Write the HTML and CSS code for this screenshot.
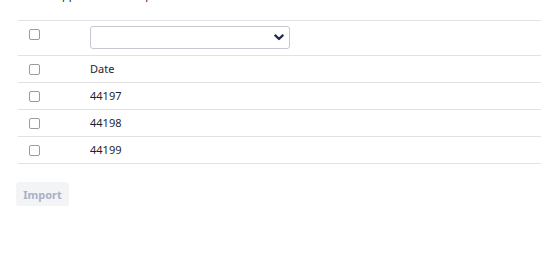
FILE: index.html
```html
<!DOCTYPE html>
<html lang="en">
<head>
<meta charset="utf-8">
<title>Import</title>
<link rel="stylesheet" href="styles.css">
</head>
<body>
<div class="page">
  <p class="intro">Some supported values: pick a column.</p>
  <table class="grid">
    <tbody>
      <tr class="head-row">
        <td class="cb-cell"><input type="checkbox" class="cb"></td>
        <td class="val-cell">
          <div class="select-wrap">
            <select class="select"><option></option></select>
            <svg class="chev" width="10" height="7" viewBox="0 0 10 7" aria-hidden="true"><path d="M1.3 1.4 L5 5 L8.7 1.4" fill="none" stroke="#1f2a4a" stroke-width="2.2" stroke-linecap="round" stroke-linejoin="round"/></svg>
          </div>
        </td>
      </tr>
      <tr>
        <td class="cb-cell"><input type="checkbox" class="cb"></td>
        <td class="val-cell">Date</td>
      </tr>
      <tr>
        <td class="cb-cell"><input type="checkbox" class="cb"></td>
        <td class="val-cell">44197</td>
      </tr>
      <tr>
        <td class="cb-cell"><input type="checkbox" class="cb"></td>
        <td class="val-cell">44198</td>
      </tr>
      <tr>
        <td class="cb-cell"><input type="checkbox" class="cb"></td>
        <td class="val-cell">44199</td>
      </tr>
    </tbody>
  </table>
  <button class="import-btn" disabled>Import</button>
</div>
</body>
</html>
```
FILE: styles.css
```css
html, body {
  margin: 0;
  padding: 0;
  background: #ffffff;
  overflow: hidden;
}
body {
  font-family: "Noto Sans", "Open Sans", sans-serif;
  font-size: 11px;
  color: #1c1f33;
}
.page {
  padding-left: 16px;
}
.intro {
  margin: -13px 0 0 2px;
  line-height: 16px;
  height: 16px;
  color: #1c1f33;
}
.grid {
  margin: 17px 0 0 2px;
  width: calc(100% - 2px);
  border-collapse: collapse;
  border-top: 1px solid #e1e1e8;
}
.grid td {
  border-bottom: 1px solid #e1e1e8;
  padding: 5px 0;
  vertical-align: top;
  line-height: 16px;
}
.head-row td {
  padding: 5px 0;
  height: 24px;
}
.cb-cell {
  width: 61px;
  padding-left: 11px !important;
}
.cb {
  appearance: none;
  -webkit-appearance: none;
  display: block;
  box-sizing: border-box;
  margin: 3px 0 0 0;
  width: 11px;
  height: 11px;
  border: 1px solid #9b9b9b;
  border-radius: 2px;
  background: #ffffff;
}
.val-cell {
  padding-left: 0;
}
.select-wrap {
  position: relative;
  width: 200px;
  height: 23px;
}
.select {
  appearance: none;
  -webkit-appearance: none;
  display: block;
  width: 200px;
  height: 23px;
  margin: 0;
  border: 1px solid #c5c8d2;
  border-radius: 3px;
  background: #ffffff;
  font-family: inherit;
  font-size: 11px;
}
.chev {
  position: absolute;
  right: 6px;
  top: 8px;
  pointer-events: none;
}
.import-btn {
  display: block;
  margin-top: 18px;
  width: 53px;
  height: 24px;
  padding: 0;
  border: none;
  border-radius: 3px;
  background: #f3f4f6;
  color: #a9b0c6;
  font-family: inherit;
  font-size: 11px;
  font-weight: 700;
}
```
